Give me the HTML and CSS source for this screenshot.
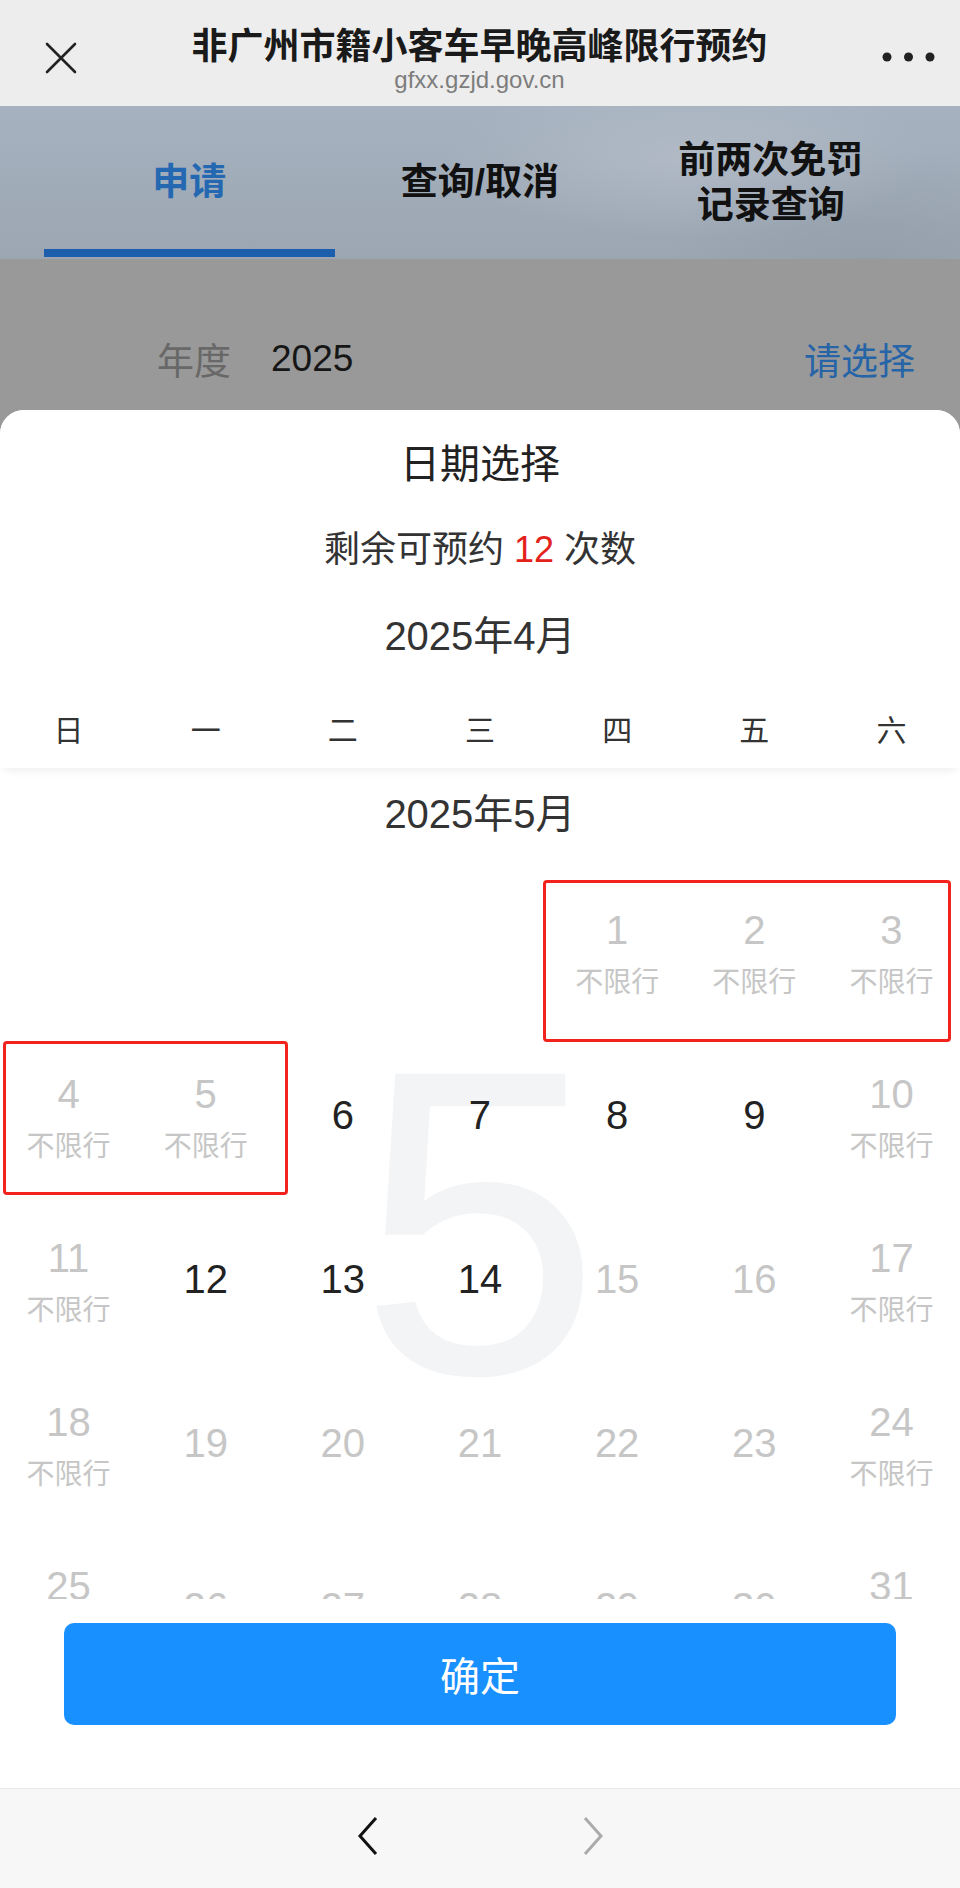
FILE: index.html
```html
<!DOCTYPE html>
<html lang="zh-CN">
<head>
    <meta charset="UTF-8">
    <meta name="viewport" content="width=device-width, initial-scale=1.0">
    <title>非广州市籍小客车早晚高峰限行预约</title>
    <link rel="stylesheet" href="styles.css">
</head>
<body>
    <!-- Browser title bar -->
    <div class="nav">
        <svg class="nav-close" viewBox="0 0 32 32">
            <path d="M2 2 L30 30 M30 2 L2 30" stroke="#222" stroke-width="2.6" fill="none" stroke-linecap="round"/>
        </svg>
        <div class="nav-title">
            <div class="nav-name">非广州市籍小客车早晚高峰限行预约</div>
            <div class="nav-host">gfxx.gzjd.gov.cn</div>
        </div>
        <svg class="nav-more" viewBox="0 0 53 10">
            <circle cx="5" cy="5" r="4.5" fill="#222"/>
            <circle cx="26.5" cy="5" r="4.5" fill="#222"/>
            <circle cx="48" cy="5" r="4.5" fill="#222"/>
        </svg>
    </div>

    <!-- Page under the mask -->
    <div class="tabs">
        <div class="tab active">申请</div>
        <div class="tab">查询/取消</div>
        <div class="tab">前两次免罚<br>记录查询</div>
    </div>

    <div class="field">
        <span class="field-label">年度</span>
        <span class="field-value">2025</span>
        <span class="field-pick">请选择</span>
    </div>

    <!-- Date picker sheet -->
    <div class="sheet">
        <div class="sheet-head">
            <div class="sheet-title">日期选择</div>
            <div class="remain">剩余可预约 <span class="remain-num">12</span> 次数</div>
            <div class="month-label">2025年4月</div>
            <div class="weekdays">
                <div>日</div>
                <div>一</div>
                <div>二</div>
                <div>三</div>
                <div>四</div>
                <div>五</div>
                <div>六</div>
            </div>
        </div>

        <div class="sheet-body">
            <div class="watermark">5</div>
            <div class="month-title">2025年5月</div>
            <div class="days">
                <div class="day"></div>
                <div class="day"></div>
                <div class="day"></div>
                <div class="day"></div>
                <div class="day free"><span class="num">1</span><span class="tag">不限行</span></div>
                <div class="day free"><span class="num">2</span><span class="tag">不限行</span></div>
                <div class="day free"><span class="num">3</span><span class="tag">不限行</span></div>

                <div class="day free"><span class="num">4</span><span class="tag">不限行</span></div>
                <div class="day free"><span class="num">5</span><span class="tag">不限行</span></div>
                <div class="day"><span class="num">6</span></div>
                <div class="day"><span class="num">7</span></div>
                <div class="day"><span class="num">8</span></div>
                <div class="day"><span class="num">9</span></div>
                <div class="day free"><span class="num">10</span><span class="tag">不限行</span></div>

                <div class="day free"><span class="num">11</span><span class="tag">不限行</span></div>
                <div class="day"><span class="num">12</span></div>
                <div class="day"><span class="num">13</span></div>
                <div class="day"><span class="num">14</span></div>
                <div class="day off"><span class="num">15</span></div>
                <div class="day off"><span class="num">16</span></div>
                <div class="day free"><span class="num">17</span><span class="tag">不限行</span></div>

                <div class="day free"><span class="num">18</span><span class="tag">不限行</span></div>
                <div class="day off"><span class="num">19</span></div>
                <div class="day off"><span class="num">20</span></div>
                <div class="day off"><span class="num">21</span></div>
                <div class="day off"><span class="num">22</span></div>
                <div class="day off"><span class="num">23</span></div>
                <div class="day free"><span class="num">24</span><span class="tag">不限行</span></div>

                <div class="day free"><span class="num">25</span><span class="tag">不限行</span></div>
                <div class="day off"><span class="num">26</span></div>
                <div class="day off"><span class="num">27</span></div>
                <div class="day off"><span class="num">28</span></div>
                <div class="day off"><span class="num">29</span></div>
                <div class="day off"><span class="num">30</span></div>
                <div class="day free"><span class="num">31</span><span class="tag">不限行</span></div>
            </div>

            <!-- annotation boxes -->
            <div class="mark mark-a"></div>
            <div class="mark mark-b"></div>
        </div>

        <div class="sheet-foot">
            <button class="confirm">确定</button>
        </div>
    </div>

    <!-- Browser toolbar -->
    <div class="toolbar">
        <svg class="chev" viewBox="0 0 22 40">
            <path d="M19 2 L3 20 L19 38" stroke="#111" stroke-width="3" fill="none"/>
        </svg>
        <svg class="chev" viewBox="0 0 22 40">
            <path d="M3 2 L19 20 L3 38" stroke="#ababab" stroke-width="3" fill="none"/>
        </svg>
    </div>
</body>
</html>
```

FILE: styles.css
```css
/* Reset */
* {
    margin: 0;
    padding: 0;
    box-sizing: border-box;
}

body {
    width: 960px;
    height: 1888px;
    overflow: hidden;
    font-family: "Liberation Sans", "Noto Sans CJK SC", sans-serif;
    color: #222;
    background: #999;
}

/* Title bar */
.nav {
    height: 106px;
    display: flex;
    align-items: flex-start;
    padding-top: 27px;
    background: #ededed;
}

.nav-close {
    width: 32px;
    height: 32px;
    margin: 15px 0 0 45px;
}

.nav-title {
    flex: 1;
    text-align: center;
}

.nav-name {
    font-size: 36px;
    line-height: 40px;
    font-weight: bold;
    color: #1a1a1a;
}

.nav-host {
    font-size: 24px;
    line-height: 26px;
    color: #7d7d7d;
}

.nav-more {
    width: 53px;
    height: 10px;
    margin: 25px 25px 0 0;
}

/* Tabs */
.tabs {
    height: 153px;
    display: grid;
    grid-template-columns: repeat(3, 1fr);
    padding: 0 44px;
    background:
        radial-gradient(ellipse 240px 80px at 690px 50px, rgba(186, 194, 204, 0.6), transparent),
        radial-gradient(ellipse 200px 110px at 870px 150px, rgba(140, 150, 164, 0.45), transparent),
        linear-gradient(180deg, #a6b2c0, #9ca6b2);
}

.tab {
    position: relative;
    display: flex;
    align-items: center;
    justify-content: center;
    text-align: center;
    font-size: 37px;
    line-height: 45px;
    font-weight: bold;
    color: #111;
}

.tab.active {
    color: #2568b2;
}

.tab.active::after {
    content: "";
    position: absolute;
    left: 0;
    right: 0;
    bottom: 2px;
    height: 8px;
    background: #1d5fac;
}

/* Year field */
.field {
    height: 151px;
    display: flex;
    align-items: center;
    padding: 49px 45px 0 157px;
    font-size: 37px;
    background: #999;
}

.field-label {
    color: #686868;
}

.field-value {
    margin-left: 40px;
    color: #161616;
}

.field-pick {
    margin-left: auto;
    color: #2664a8;
}

/* Sheet */
.sheet {
    background: #fff;
    border-radius: 24px 24px 0 0;
}

.sheet-head {
    position: relative;
    z-index: 2;
    padding: 24px 0 7px;
    text-align: center;
    color: #333;
    background: #fff;
    border-radius: 24px 24px 0 0;
    box-shadow: 0 6px 10px -4px rgba(0, 0, 0, 0.08);
}

.sheet-title {
    font-size: 40px;
    line-height: 60px;
    color: #222;
}

.remain {
    margin-top: 26px;
    font-size: 36px;
    line-height: 60px;
}

.remain-num {
    color: #e4211b;
}

.month-label {
    margin-top: 26px;
    font-size: 40px;
    line-height: 60px;
}

.weekdays {
    margin-top: 35px;
    display: grid;
    grid-template-columns: repeat(7, 1fr);
    font-size: 30px;
    line-height: 60px;
}

.sheet-body {
    position: relative;
    height: 831px;
    overflow: hidden;
}

.watermark {
    position: absolute;
    top: 237px;
    left: 0;
    right: 0;
    text-align: center;
    font-size: 435px;
    line-height: 1;
    color: #f3f4f6;
}

.month-title {
    position: relative;
    padding: 16px 0 30px;
    text-align: center;
    font-size: 40px;
    line-height: 60px;
    color: #333;
}

.days {
    position: relative;
    display: grid;
    grid-template-columns: repeat(7, 1fr);
    grid-auto-rows: 164px;
}

.day {
    display: flex;
    flex-direction: column;
    align-items: center;
    justify-content: center;
    gap: 13px;
    padding-bottom: 10px;
    color: #222;
}

.day.free {
    padding-bottom: 0;
}

.num {
    font-size: 40px;
    line-height: 40px;
}

.tag {
    font-size: 28px;
    line-height: 40px;
}

.day.free,
.day.off {
    color: #c6c6c6;
}

.mark {
    position: absolute;
    border: 3px solid #f2231d;
    border-radius: 4px;
}

.mark-a {
    top: 112px;
    left: 543px;
    width: 408px;
    height: 162px;
}

.mark-b {
    top: 273px;
    left: 3px;
    width: 285px;
    height: 154px;
}

.sheet-foot {
    height: 189px;
    padding: 24px 64px 0;
}

.confirm {
    width: 100%;
    height: 102px;
    border: none;
    border-radius: 10px;
    background: #1890ff;
    color: #fff;
    font-family: inherit;
    font-size: 40px;
}

/* Toolbar */
.toolbar {
    height: 100px;
    display: flex;
    align-items: center;
    justify-content: center;
    gap: 203px;
    padding-bottom: 6px;
    background: #f7f7f7;
    border-top: 1px solid #e8e8e8;
}

.chev {
    width: 22px;
    height: 40px;
}
```
